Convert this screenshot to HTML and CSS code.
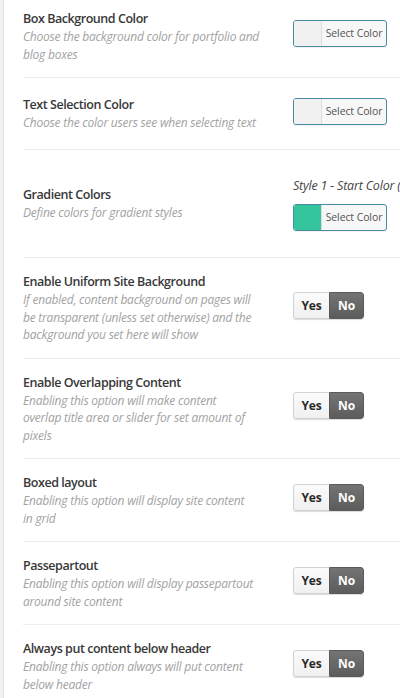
FILE: index.html
```html
<!DOCTYPE html>
<html lang="en">
<head>
<meta charset="utf-8">
<title>Theme Options</title>
<link rel="stylesheet" href="styles.css">
</head>
<body>
<div class="page">
  <div class="panel">
    <div class="list">
      <div class="row row-color">
        <div class="info">
          <div class="title">Box Background Color</div>
          <div class="desc">Choose the background color for portfolio and<br>blog boxes</div>
        </div>
        <div class="control">
          <button class="picker"><span class="swatch"></span><span class="picker-label">Select Color</span></button>
        </div>
      </div>

      <div class="row row-color">
        <div class="info">
          <div class="title">Text Selection Color</div>
          <div class="desc">Choose the color users see when selecting text</div>
        </div>
        <div class="control">
          <button class="picker"><span class="swatch"></span><span class="picker-label">Select Color</span></button>
        </div>
      </div>

      <div class="row row-gradient">
        <div class="info">
          <div class="title">Gradient Colors</div>
          <div class="desc">Define colors for gradient styles</div>
        </div>
        <div class="control control-stack">
          <div class="sub-label">Style 1 - Start Color (</div>
          <button class="picker"><span class="swatch swatch-green"></span><span class="picker-label">Select Color</span></button>
        </div>
      </div>

      <div class="row">
        <div class="info">
          <div class="title">Enable Uniform Site Background</div>
          <div class="desc">If enabled, content background on pages will<br>be transparent (unless set otherwise) and the<br>background you set here will show</div>
        </div>
        <div class="control">
          <div class="toggle"><span class="opt opt-yes">Yes</span><span class="opt opt-no">No</span></div>
        </div>
      </div>

      <div class="row">
        <div class="info">
          <div class="title">Enable Overlapping Content</div>
          <div class="desc">Enabling this option will make content<br>overlap title area or slider for set amount of<br>pixels</div>
        </div>
        <div class="control">
          <div class="toggle"><span class="opt opt-yes">Yes</span><span class="opt opt-no">No</span></div>
        </div>
      </div>

      <div class="row">
        <div class="info">
          <div class="title">Boxed layout</div>
          <div class="desc">Enabling this option will display site content<br>in grid</div>
        </div>
        <div class="control">
          <div class="toggle"><span class="opt opt-yes">Yes</span><span class="opt opt-no">No</span></div>
        </div>
      </div>

      <div class="row">
        <div class="info">
          <div class="title">Passepartout</div>
          <div class="desc">Enabling this option will display passepartout<br>around site content</div>
        </div>
        <div class="control">
          <div class="toggle"><span class="opt opt-yes">Yes</span><span class="opt opt-no">No</span></div>
        </div>
      </div>

      <div class="row">
        <div class="info">
          <div class="title">Always put content below header</div>
          <div class="desc">Enabling this option always will put content<br>below header</div>
        </div>
        <div class="control">
          <div class="toggle"><span class="opt opt-yes">Yes</span><span class="opt opt-no">No</span></div>
        </div>
      </div>
    </div>
  </div>
</div>
</body>
</html>
```

FILE: styles.css
```css
html, body {
  margin: 0;
  padding: 0;
  background: #ffffff;
  overflow: hidden;
}

body {
  font-family: "Open Sans", "Noto Sans", sans-serif;
  color: #333333;
}

.page {
  border-left: 3px solid #f1f1f1;
  min-height: 698px;
  box-sizing: border-box;
}

.panel {
  border-left: 1px solid #e2e2e2;
  padding-left: 19px;
  min-height: 698px;
  box-sizing: border-box;
}

.list {
  margin-top: -5px;
}

.row {
  display: flex;
  align-items: center;
  box-sizing: border-box;
  padding: 15px 0 14px;
  border-bottom: 1px solid #ececec;
}

.row-color {
  min-height: 72px;
}

.row-gradient {
  min-height: 108px;
}

.info {
  width: 270px;
  flex: 0 0 270px;
  box-sizing: border-box;
}

.title {
  font-size: 12.5px;
  font-weight: 600;
  line-height: 18px;
  letter-spacing: -0.45px;
  color: #383838;
}

.desc {
  font-size: 12px;
  font-style: italic;
  line-height: 17.5px;
  letter-spacing: -0.22px;
  color: #a2a2a2;
  white-space: nowrap;
}

.control {
  margin-bottom: 6px;
  white-space: nowrap;
}

.control-stack {
  margin-bottom: 0;
  display: flex;
  flex-direction: column;
  align-items: flex-start;
  gap: 9px;
}

.sub-label {
  font-size: 12.5px;
  font-style: italic;
  line-height: 18px;
  letter-spacing: -0.2px;
  color: #444444;
}

.picker {
  display: flex;
  width: 94px;
  height: 27px;
  padding: 0;
  margin: 0;
  border: 1px solid #4a8aa3;
  border-radius: 3px;
  background: #f7f7f7;
  overflow: hidden;
  box-sizing: border-box;
  font-family: inherit;
  cursor: pointer;
  box-shadow: 0 1px 0 rgba(0, 0, 0, 0.05);
}

.swatch {
  width: 28px;
  height: 100%;
  background: #f1f1f1;
  border-right: 1px solid #dddddd;
  box-sizing: border-box;
}

.swatch-green {
  background: #34c59c;
}

.picker-label {
  flex: 1;
  font-size: 10.5px;
  line-height: 25px;
  letter-spacing: -0.1px;
  color: #555555;
  text-align: center;
}

.toggle {
  display: inline-flex;
  height: 27px;
  border-radius: 3px;
  overflow: hidden;
  box-shadow: 0 1px 1px rgba(0, 0, 0, 0.15);
}

.opt {
  display: flex;
  align-items: center;
  justify-content: center;
  box-sizing: border-box;
  font-size: 12px;
  font-weight: 700;
  letter-spacing: -0.2px;
}

.opt-yes {
  width: 36px;
  color: #2a2a2a;
  background: linear-gradient(#fbfbfb, #f0f0f0);
  border: 1px solid #d2d2d2;
  border-right: none;
  border-radius: 3px 0 0 3px;
}

.opt-no {
  width: 35px;
  color: #ffffff;
  background: linear-gradient(#747474, #5c5c5c);
  border: 1px solid #5a5a5a;
  border-radius: 0 3px 3px 0;
}
```
